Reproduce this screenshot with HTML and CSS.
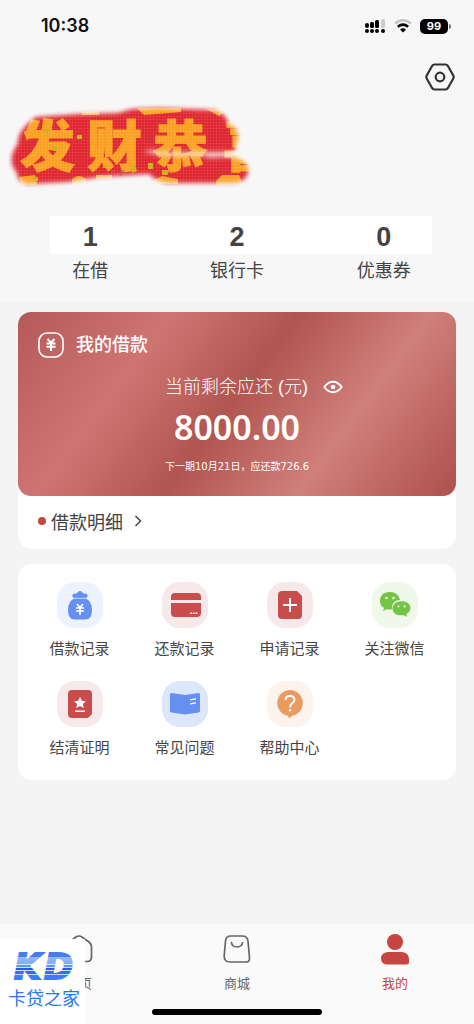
FILE: index.html
```html
<!DOCTYPE html>
<html lang="zh-CN">
<head>
<meta charset="utf-8">
<meta name="viewport" content="width=device-width, initial-scale=1">
<title>我的</title>
<link rel="stylesheet" href="styles.css">
</head>
<body>
<header class="top">
  <div class="status">
    <span class="time">10:38</span>
    <div class="status-icons">
      <svg width="22" height="16" viewBox="0 0 22 16" aria-hidden="true">
        <rect x="1" y="5" width="4" height="5" rx="2"/><rect x="6" y="4" width="4" height="6" rx="1.5"/><rect x="11" y="2" width="4" height="8" rx="1.5"/><rect x="17" y="1" width="4" height="9" rx="1.5" fill="#ccc"/>
        <circle cx="3" cy="13" r="2"/><circle cx="8" cy="13" r="2"/><circle cx="13" cy="13" r="2"/><circle cx="19" cy="13" r="2"/>
      </svg>
      <svg width="18" height="14" viewBox="0 0 18 14" fill="none" aria-hidden="true">
        <path d="M1 4.500Q9-2 17 4.500" stroke="#c4c4c4" stroke-width="2.500"/>
        <path d="M3.800 7.800Q9 3.500 14.200 7.800" stroke="#000" stroke-width="2.500"/>
        <path d="M6 10.500Q9 8.200 12 10.500L9 13.500Z" fill="#000"/>
      </svg>
      <span class="battery">99</span>
    </div>
  </div>
  <div class="actions">
    <button class="settings" aria-label="设置">
      <svg width="30" height="28" viewBox="0 0 30 28" fill="none" stroke="#333" stroke-width="2.200" stroke-linejoin="round">
        <path d="M9.500 1.500H20.500Q22 1.500 22.800 2.800L28.300 12.500Q29 14 28.300 15.500L22.800 25.200Q22 26.500 20.500 26.500H9.500Q8 26.500 7.200 25.200L1.700 15.500Q1 14 1.700 12.500L7.200 2.800Q8 1.500 9.500 1.500Z"/>
        <circle cx="15" cy="14" r="4.300"/>
      </svg>
    </button>
  </div>
  <svg class="banner" width="290" height="100" viewBox="0 0 290 100" role="img" aria-label="发财恭喜">
    <defs>
      <filter id="soft" x="-10%" y="-10%" width="120%" height="120%"><feGaussianBlur stdDeviation="2.200"/></filter>
      <pattern id="weave" width="3" height="3" patternUnits="userSpaceOnUse"><path d="M0 0H3M0 0V3" stroke="#fff" stroke-opacity=".12" stroke-width="1"/></pattern>
      <mask id="brush">
        <g filter="url(#soft)">
          <path fill="#fff" d="M36 22L80 19 118 18 132 14 160 13 214 15Q228 20 228 29 239 32 238 43L235 56 207 60V63L233 62Q250 66 248 78 245 88 231 88H168Q155 86 149 79L100 82 68 87 26 89Q16 84 17 78 10 70 12 60 14 54 18 48 17 36 36 22Z"/>
          <path d="M143 57Q152 52 158 56H226V62H200L158 61Z" fill="#000" fill-opacity=".75"/>
        </g>
      </mask>
    </defs>
    <g mask="url(#brush)">
      <rect width="290" height="100" fill="#df2630"/>
      <g class="banner-text">
        <text x="20" y="71">发</text><text x="87" y="71">财</text><text x="153" y="71">恭</text><text x="223" y="71">喜</text>
      </g>
      <g fill="#fca021">
        <path d="M82 16H99V20H82ZM137 13H181V17L144 20ZM206 14H227L219 21ZM19 82L35 80 37 90H22ZM72 84Q79 78 86 84V90H72ZM96 80H112V84H96ZM154 85L162 81 178 84V89H154ZM216 86L222 80H239L243 90H216Z"/>
      </g>
      <g fill="#d0ae16"><path d="M43 34h6v4h-6zM77 40h5v4h-5zM53 51h4v5h-4zM130 72l5-3 2 7-5 2zM148 68h5v6h-5zM162 75h6v5h-6zM33 82h5v4h-5zM103 69h4v4h-4z"/></g>
      <rect width="290" height="100" fill="url(#weave)"/>
    </g>
    <path d="M110 79L114 75M120 81L124 75" stroke="#a76569" stroke-width="1"/>
  </svg>
  <div class="stats">
    <div class="stat"><strong>1</strong><span>在借</span></div>
    <div class="stat"><strong>2</strong><span>银行卡</span></div>
    <div class="stat"><strong>0</strong><span>优惠券</span></div>
  </div>
</header>

<main class="content">
  <section class="loan">
    <div class="loan-card">
      <h1 class="loan-title">
        <svg width="26" height="26" viewBox="0 0 26 26" fill="none" stroke="#fff" stroke-width="1.600" aria-hidden="true">
          <rect x="1" y="1" width="24" height="24" rx="8"/>
          <path d="M9.500 7L13 10.800 16.500 7M8.500 11.500H17.500M8.500 14.800H17.500M13 11V19" stroke-width="2"/>
        </svg>
        我的借款
      </h1>
      <div class="due">
        <span>当前剩余应还 (元)</span>
        <button class="eye" aria-label="隐藏金额">
          <svg width="20" height="14" viewBox="0 0 20 14" fill="none" stroke="#fff" stroke-width="1.900"><path d="M1.300 7Q5 1.800 10 1.800T18.700 7Q15 12.200 10 12.200T1.300 7Z" stroke-linejoin="round"/><circle cx="10" cy="7" r="2.300" fill="#fff" stroke="none"/></svg>
        </button>
      </div>
      <p class="amount">8000.00</p>
      <p class="next">下一期10月21日，应还款726.6</p>
    </div>
    <a class="details" href="#details">
      <i class="dot"></i>借款明细
      <svg width="8" height="12" viewBox="0 0 8 12" fill="none" stroke="#444" stroke-width="1.500" aria-hidden="true"><path d="M1.500 1L6.500 6 1.500 11"/></svg>
    </a>
  </section>

  <nav class="services" aria-label="服务">
    <a class="service" href="#loans"><span class="tile pale-blue">
      <svg viewBox="0 0 46 46"><path fill="#6590f2" d="M18 16C14 16 15 11 18 11.500 20 12 20 11 21 10Q23 8 25 10C26 11 26 12 28 11.500 31 11 32 16 28 16ZM17 16.500H29Q35 20 35 28 35 37 29 37.500H17Q11 37 11 28 11 20 17 16.500Z"/><path fill="none" stroke="#b9cffc" stroke-width="1" d="M17 16.300H29"/><path fill="none" stroke="#fff" stroke-width="1.600" d="M20 22L23 25.500 26 22M19 26H27M19 29H27M23 25V33"/></svg>
    </span>借款记录</a>
    <a class="service" href="#repayments"><span class="tile pale-red">
      <svg viewBox="0 0 46 46"><path fill="#c94d4c" d="M9 18V15Q9 11 13 11H35Q39 11 39 15V18ZM9 21H39V31Q39 35 35 35H13Q9 35 9 31Z"/><path stroke="#ffe9e6" stroke-width="1.500" stroke-dasharray="2 .7" d="M28 31.300H36"/></svg>
    </span>还款记录</a>
    <a class="service" href="#applications"><span class="tile pale-red">
      <svg viewBox="0 0 46 46"><path fill="#c94d4c" d="M15 9H30L35 14V33Q35 37 31 37H15Q11 37 11 33V13Q11 9 15 9Z"/><path stroke="#fff" stroke-width="2" d="M16 23H30M23 16V30"/></svg>
    </span>申请记录</a>
    <a class="service" href="#wechat"><span class="tile pale-green">
      <svg viewBox="0 0 46 46"><path fill="#73c545" d="M18 10C11 10 8 14 8 19 8 22 9 24 12 26L11 29 15 27Q18 28 20 27C19 22 23 18 28 18 27 13 23 10 18 10Z"/><path fill="#73c545" d="M29.500 19.300C24 19.300 20.500 22.500 20.500 26.500 20.500 31 25 34.300 31 33L35 35 34.300 32C37 30.500 38.500 28.500 38.500 26 38.500 22 34.500 19.300 29.500 19.300Z"/><g fill="#f3fbed"><circle cx="14.500" cy="16" r="1.300"/><circle cx="21.500" cy="16" r="1.300"/><circle cx="26.500" cy="24.300" r="1.100"/><circle cx="32.500" cy="24.300" r="1.100"/></g></svg>
    </span>关注微信</a>
    <a class="service" href="#certificate"><span class="tile pale-red">
      <svg viewBox="0 0 46 46"><path fill="#c94d4c" d="M15 9H31Q35 9 35 13V33L31 37H15Q11 37 11 33V13Q11 9 15 9Z"/><path fill="#fff" d="M23 16L24.800 19.700 28.800 20.200 25.900 23 26.600 27 23 25.100 19.400 27 20.100 23 17.200 20.200 21.200 19.700Z"/><path stroke="#fff" stroke-width="1.400" d="M18 30.200H28"/></svg>
    </span>结清证明</a>
    <a class="service" href="#faq"><span class="tile light-blue">
      <svg viewBox="0 0 46 46"><path fill="#6590f2" d="M9.500 12L23 14 36.500 12Q38 12 38 13.500V30Q38 31 36.500 31.500L23 33.500 9.500 31.500Q8 31 8 30V13.500Q8 12 9.500 12Z"/><path stroke="#fff" stroke-width="1.200" d="M28 18.800L34 17.900M28 22.800L34 21.900"/></svg>
    </span>常见问题</a>
    <a class="service" href="#help"><span class="tile pale-orange">
      <svg viewBox="0 0 46 46"><path fill="#e99b60" d="M23 9A13 13 0 0 1 25 34.800L22 37.500 21 34.800A13 13 0 0 1 23 9Z"/><path fill="none" stroke="#fff" stroke-width="1.900" d="M18.500 19Q18.500 15 23 15 27.500 15 27.500 18.800 27.500 21 25 22.500 23 23.800 23 26.500"/><circle cx="23" cy="29.300" r="1.200" fill="#fff"/></svg>
    </span>帮助中心</a>
  </nav>
</main>

<footer class="bottom">
  <nav class="tabs" aria-label="主导航">
    <a class="tab" href="#home"><svg width="30" height="32" viewBox="0 0 30 32" fill="none" stroke="#666" stroke-width="1.700"><path d="M15 3Q16.500 3 18 4L25 9Q27.500 11 27.500 14V24Q27.500 28.500 23 28.500H7Q2.500 28.500 2.500 24V14Q2.500 11 5 9L12 4Q13.500 3 15 3Z"/></svg>首页</a>
    <a class="tab" href="#mall"><svg width="30" height="32" viewBox="0 0 30 32" fill="none" stroke="#666" stroke-width="1.700"><path d="M9 3H20Q25.500 3 26 8L27.500 25Q27.800 29 24.500 29H8Q2 29 2.200 23L3.500 8Q4 3 9 3Z"/><path d="M9.300 9Q10 14 15 14T20.700 9"/></svg>商城</a>
    <a class="tab active" href="#me" aria-current="page"><svg width="30" height="32" viewBox="0 0 30 32" fill="#c74541"><circle cx="15" cy="9" r="8"/><path d="M8 19H22Q29 20 29 26V29Q29 31.500 26.500 31.500H7Q1 31 1 25 1 20 8 19Z"/></svg>我的</a>
  </nav>
  <div class="indicator"></div>
  <div class="brand">
    <svg width="76" height="42" viewBox="0 0 76 42" role="img" aria-label="KD">
      <defs><linearGradient id="bars" x1="0" y1="8" x2="0" y2="34" gradientUnits="userSpaceOnUse">
        <stop offset="0" stop-color="#477de8"/><stop offset=".1" stop-color="#477de8"/><stop offset=".1" stop-color="#97baf8"/><stop offset=".38" stop-color="#80acfa"/><stop offset=".38" stop-color="#dce9ff"/><stop offset=".41" stop-color="#dce9ff"/><stop offset=".41" stop-color="#508aff"/><stop offset=".5" stop-color="#6799ff"/><stop offset=".5" stop-color="#d2e2ff"/><stop offset=".54" stop-color="#d2e2ff"/><stop offset=".54" stop-color="#235ce0"/><stop offset=".61" stop-color="#235ce0"/><stop offset=".61" stop-color="#cfe0ff"/><stop offset=".65" stop-color="#cfe0ff"/><stop offset=".65" stop-color="#2f6df5"/><stop offset=".75" stop-color="#2f6df5"/><stop offset=".75" stop-color="#c0d6ff"/><stop offset=".79" stop-color="#c0d6ff"/><stop offset=".79" stop-color="#3c7aff"/><stop offset="1" stop-color="#3c7aff"/>
      </linearGradient></defs>
      <text class="brand-mark" y="33"><tspan x="6">K</tspan><tspan x="36">D</tspan></text>
    </svg>
    <span>卡贷之家</span>
  </div>
</footer>
</body>
</html>
```
FILE: styles.css
```css
* { box-sizing: border-box; }

body {
  margin: 0;
  min-height: 100vh;
  display: flex;
  flex-direction: column;
  background: #f4f4f4;
  color: #444;
  font-family: "Liberation Sans", "Noto Sans CJK SC", sans-serif;
}

a { color: inherit; text-decoration: none; }
button { padding: 0; border: 0; background: none; cursor: pointer; }
svg { display: block; flex: none; }
h1, p { margin: 0; }

.top { background: #f7f7f7; padding-bottom: 18px; }

.status {
  display: flex;
  justify-content: space-between;
  align-items: center;
  height: 52px;
  padding: 0 24px 0 41px;
}
.time { font: 600 18px/24px Inter, sans-serif; color: #111; }
.status-icons { display: flex; align-items: center; gap: 8px; }
.battery {
  position: relative;
  width: 28px;
  margin-right: 2px;
  border-radius: 5px;
  background: #000;
  color: #fff;
  font: 700 11px/15px Inter, sans-serif;
  text-align: center;
}
.battery::after {
  content: "";
  position: absolute;
  top: 5px;
  right: -3px;
  width: 2px;
  height: 5px;
  border-radius: 0 2px 2px 0;
  background: #777;
}

.actions { display: flex; justify-content: flex-end; padding: 11px 19px 0; }

.banner { margin-top: 4px; }
.banner-text {
  fill: #fca021;
  stroke: #fca021;
  stroke-width: 1px;
  font: 900 55px "Noto Sans CJK SC", sans-serif;
}

.stats {
  position: relative;
  display: grid;
  grid-template-columns: repeat(3, 1fr);
  margin: 21px 17px 0;
}
.stats::before {
  content: "";
  position: absolute;
  inset: 0 25px auto 33px;
  height: 38px;
  background: #fff;
}
.stat { position: relative; display: flex; flex-direction: column; align-items: center; }
.stat strong { font-size: 27px; line-height: 42px; }
.stat span { font-size: 18px; line-height: 26px; }

.content { padding: 10px 18px 24px; }

.loan { border-radius: 14px; background: #fff; }
.loan-card {
  padding: 19px 20px 20px;
  border-radius: 13px;
  background: linear-gradient(127deg, #b45957, #ce7573 27%, #b15550 49%, #d07f7b 72%, #b15550 97%);
  color: #fff;
}
.loan-title {
  display: flex;
  align-items: center;
  gap: 12px;
  font-size: 18px;
  font-weight: 500;
  line-height: 28px;
}
.due {
  display: flex;
  justify-content: center;
  align-items: center;
  gap: 15px;
  margin: 14px 0 0 34px;
  font-size: 18px;
  font-weight: 300;
  line-height: 28px;
}
.amount {
  font: 600 34px/48px "Noto Sans", sans-serif;
  text-align: center;
  margin-top: 2px;
}
.next {
  margin-top: 7px;
  font: 10px/18px "DejaVu Sans", "Noto Sans CJK SC", sans-serif;
  text-align: center;
}
.details {
  display: flex;
  align-items: center;
  height: 53px;
  padding: 0 20px 3px;
  font-size: 18px;
}
.details svg { margin-left: 11px; }
.dot { width: 8px; height: 8px; margin-right: 5px; border-radius: 50%; background: #c74541; }

.services {
  display: grid;
  grid-template-columns: repeat(4, 1fr);
  row-gap: 20px;
  margin-top: 15px;
  padding: 18px 9px 20px;
  border-radius: 14px;
  background: #fff;
}
.service {
  display: flex;
  flex-direction: column;
  align-items: center;
  gap: 9px;
  font-size: 15px;
  line-height: 24px;
}
.tile { width: 46px; height: 46px; border-radius: 18px; }
.pale-blue { background: #ecf2fe; }
.light-blue { background: #dce7fc; }
.pale-red { background: #f7e9e9; }
.pale-green { background: #eff8e9; }
.pale-orange { background: #fdf3ed; }

.bottom {
  position: relative;
  margin-top: auto;
  padding: 9px 0;
  background: #fafafa;
}
.tabs { display: grid; grid-template-columns: repeat(3, 1fr); }
.tab {
  display: flex;
  flex-direction: column;
  align-items: center;
  gap: 9px;
  color: #666;
  font-size: 13px;
  line-height: 20px;
}
.tab.active { color: #c74541; }
.indicator {
  width: 170px;
  height: 6px;
  margin: 15px auto 0;
  border-radius: 3px;
  background: #000;
}
.brand {
  position: absolute;
  left: 0;
  bottom: 0;
  width: 85px;
  height: 85px;
  padding: 7px 0 0 8px;
  background: #fff;
  color: #2874ef;
  font-size: 18px;
  line-height: 22px;
  white-space: nowrap;
}
.brand span { display: block; }
.brand-mark {
  fill: url(#bars);
  stroke: url(#bars);
  stroke-width: 2px;
  font: italic 700 35px "DejaVu Sans", sans-serif;
}
```
